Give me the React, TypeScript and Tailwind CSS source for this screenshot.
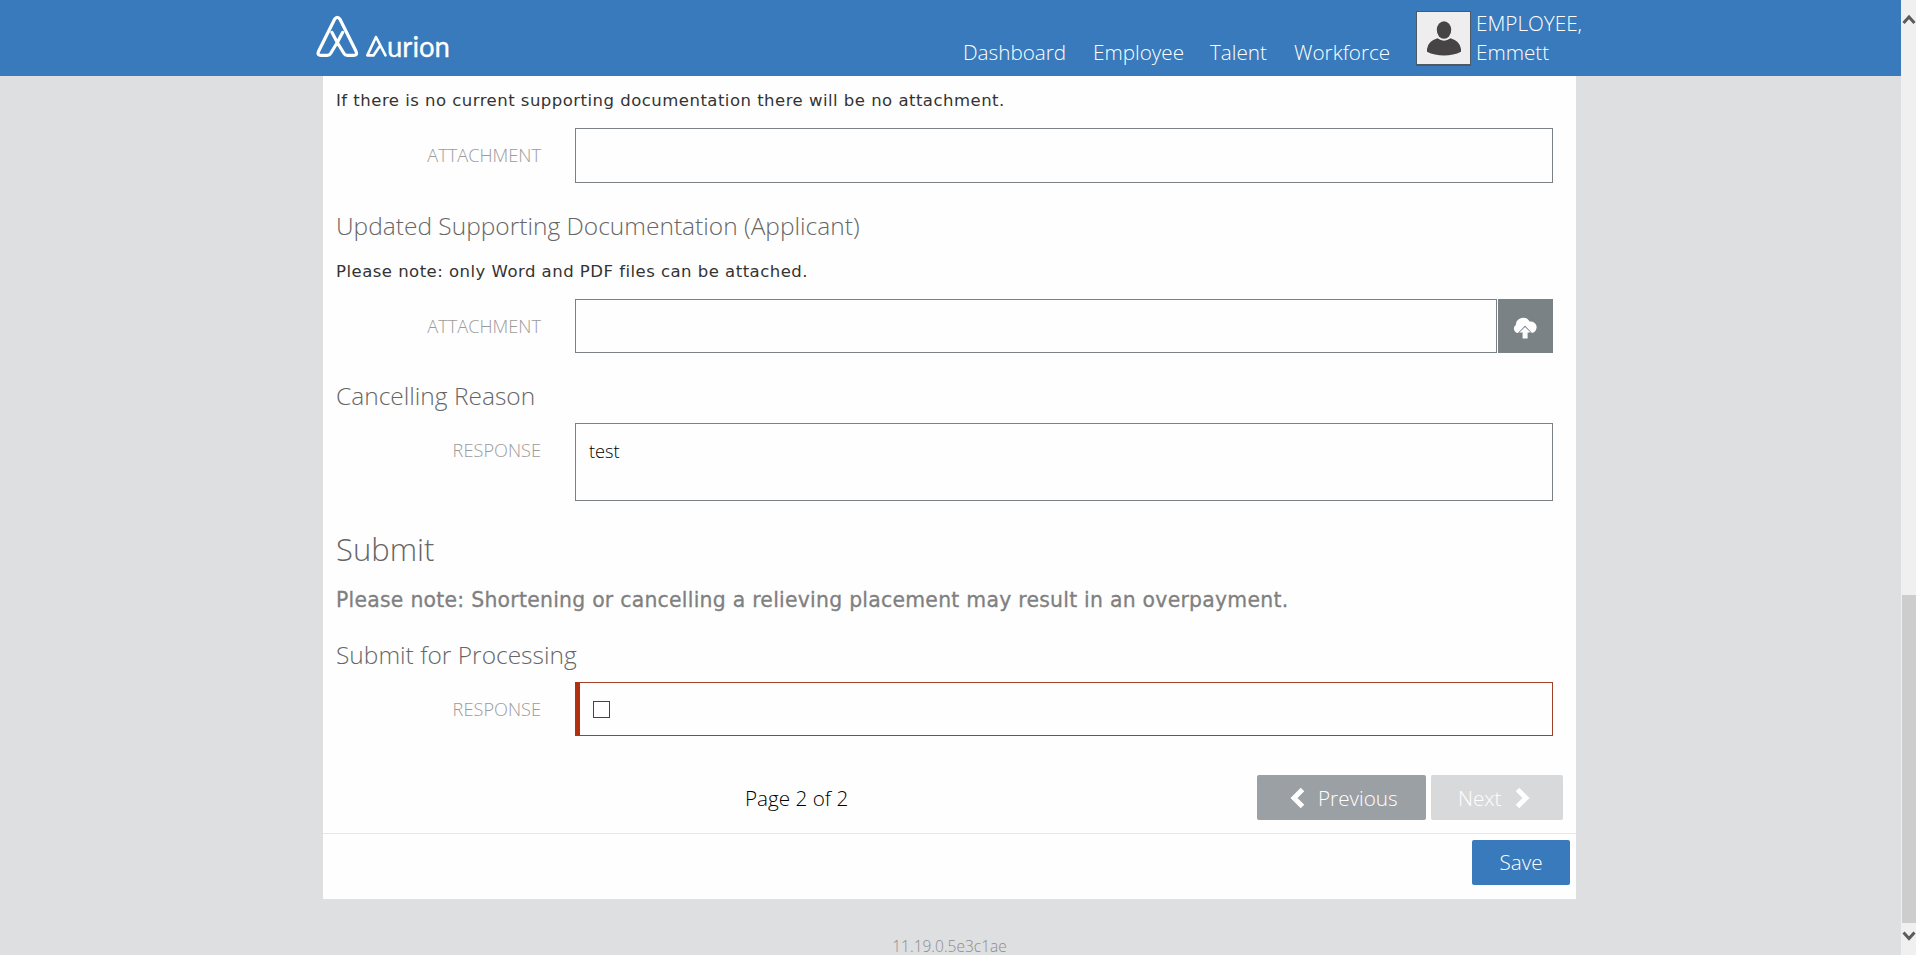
import React from "react";

const sans = "font-['Open_Sans','Liberation_Sans',sans-serif] font-light";
const verdana = "font-['DejaVu_Sans',Verdana,sans-serif]";

function Logo() {
  return (
    <svg className="mt-[14px] block h-[48px] w-[140px]" viewBox="0 0 140 48" fill="none" stroke="#fff" strokeLinecap="round" strokeLinejoin="round">
      <g strokeWidth="3.2">
        <path d="M16 18.5 L21.3 28.5 L28 39.5 Q29 41.3 31.5 41.3 H37.5 Q41.8 41.3 40 37.3 L24 5.2 Q21.3 1.4 18.6 5.2 L2.6 37.3 Q0.8 41.3 5.1 41.3 H11.1 Q13.6 41.3 14.6 39.5 L21.3 28.5 L26.6 18.5" />
      </g>
      <path strokeWidth="2.6" d="M69.5 41.4 L60 23 L51.3 41.4 H57.5 L63.5 32.5" />
      <text x="71" y="42.5" fill="#fff" stroke="#fff" strokeWidth="0.3" fontSize="29.5" textLength="63" lengthAdjust="spacingAndGlyphs" className="font-['Lato',sans-serif]">urion</text>
    </svg>
  );
}

function Avatar() {
  return (
    <div className="mt-[11px] h-[55px] w-[55px] border border-b-2 border-[#4d5a66] bg-[#efeeef]">
      <svg viewBox="0 0 53 52" className="block h-full w-full" fill="#464445">
        <ellipse cx="27" cy="18" rx="7.2" ry="8.8" />
        <path d="M20.5 26.3 Q27 31 33.5 26.3 Q43 29 44 37 L44 39.8 Q36.5 43.6 27 43.6 Q17.5 43.6 10 39.8 L10 37 Q11 29 20.5 26.3Z" />
      </svg>
    </div>
  );
}

function Header() {
  return (
    <header className="flex h-[76px] shrink-0 bg-[#387abb] pl-[316px] text-white">
      <Logo />
      <nav className={`${sans} ml-[507px] flex h-[76px] w-[453px] items-start whitespace-nowrap pt-[38px] text-[20.7px] leading-[29px]`}>
        <a className="w-[130px]">Dashboard</a>
        <a className="w-[117px]">Employee</a>
        <a className="w-[84px]">Talent</a>
        <a>Workforce</a>
      </nav>
      <Avatar />
      <div className={`${sans} ml-[5px] pt-[9px] text-[20.7px] leading-[29px]`}>
        <div>EMPLOYEE,</div>
        <div>Emmett</div>
      </div>
    </header>
  );
}

function Row({ label, children }: { label: string; children: React.ReactNode }) {
  return (
    <div className="flex">
      <div className={`${sans} w-[205px] pt-[14px] text-right text-[18.2px] leading-[26px] text-[#9b9b9b]`}>{label}</div>
      <div className="ml-[34px] flex w-[978px]">{children}</div>
    </div>
  );
}

function Chevron({ left }: { left?: boolean }) {
  return (
    <svg width="15" height="22" viewBox="0 0 15 22" fill="none" stroke="#fff" strokeWidth="5">
      <path d={left ? "M12.5 2.5 L4 11 L12.5 19.5" : "M2.5 2.5 L11 11 L2.5 19.5"} />
    </svg>
  );
}

function Scrollbar() {
  return (
    <div className="flex w-[15px] shrink-0 flex-col items-end bg-[#f0f0f0]">
      <svg className="h-[595px] w-[14px]" viewBox="0 0 14 595" fill="none" stroke="#5b5b5b" strokeWidth="3">
        <path d="M1.5 23 L7 17 L12.5 23" />
      </svg>
      <div className="h-[328px] w-[14px] bg-[#cdcdcd]" />
      <svg className="h-[32px] w-[14px]" viewBox="0 0 14 32" fill="none" stroke="#5b5b5b" strokeWidth="3">
        <path d="M1.5 9.5 L7 15.5 L12.5 9.5" />
      </svg>
    </div>
  );
}

export default function App() {
  return (
    <div className="flex h-[955px] w-[1916px] overflow-hidden bg-[#dedfe1]">
      <div className="flex h-full w-[1901px] flex-col">
        <Header />
        <main className="ml-[323px] flex h-[823px] w-[1253px] shrink-0 flex-col whitespace-nowrap bg-[#fefefe]">
          <div className="h-[757px] pl-[13px]">
            <p className={`${verdana} h-[52px] pt-[13px] text-[16.5px] leading-[24px] tracking-[0.48px] text-[#333]`}>
              If there is no current supporting documentation there will be no attachment.
            </p>
            <Row label="ATTACHMENT">
              <div className="h-[55px] w-full border border-[#7b8085]" />
            </Row>
            <h3 className={`${sans} h-[72px] pt-[25px] text-[24.5px] leading-[36px] text-[#666]`}>Updated Supporting Documentation (Applicant)</h3>
            <p className={`${verdana} h-[44px] pt-[5px] text-[16.5px] leading-[24px] tracking-[0.48px] text-[#333]`}>
              Please note: only Word and PDF files can be attached.
            </p>
            <Row label="ATTACHMENT">
              <div className="h-[54px] w-[922px] border border-[#7b8085]" />
              <button className="ml-px flex h-[54px] w-[55px] items-center justify-center bg-[#7b8286]">
                <svg className="mt-[3px]" width="25" height="22" viewBox="0 0 25 22" fill="#fff">
                  <path d="M5 16 A4.4 4.4 0 0 1 2.8 8 A7.4 7.4 0 0 1 16.6 4.6 A5.8 5.8 0 1 1 19 16 L12 8.6 Z" />
                  <path d="M12 10 L17.6 15.6 H14.6 V21.5 H9.6 V15.6 H6.4 Z" />
                </svg>
              </button>
            </Row>
            <h3 className={`${sans} h-[70px] pt-[25px] text-[24.5px] leading-[36px] text-[#666]`}>Cancelling Reason</h3>
            <Row label="RESPONSE">
              <div className={`${sans} h-[78px] w-full border border-[#7b8085] pl-[13px] pt-[14px] text-[18.2px] leading-[26px] text-black`}>test</div>
            </Row>
            <h2 className={`${sans} h-[80px] pt-[25px] text-[31px] leading-[46px] text-[#666]`}>Submit</h2>
            <p className={`${verdana} h-[50px] pt-[4px] text-[20.4px] leading-[30px] tracking-[0.25px] text-[#808080] [-webkit-text-stroke:0.3px_#808080]`}>
              Please note: Shortening or cancelling a relieving placement may result in an overpayment.
            </p>
            <h3 className={`${sans} h-[51px] pt-[6px] text-[24.5px] leading-[36px] text-[#666]`}>Submit for Processing</h3>
            <Row label="RESPONSE">
              <div className="flex h-[54px] w-full items-center border border-l-[5px] border-[#a04028] border-l-[#b03010] pl-[13px]">
                <div className="h-[17px] w-[17px] border border-[#444] bg-white" />
              </div>
            </Row>
            <div className="flex h-[97px] pt-[39px]">
              <div className={`${sans} w-[921px] pl-[409px] pt-[8px] text-[20.7px] leading-[30px] text-black`}>Page 2 of 2</div>
              <button className={`${sans} flex h-[45px] w-[169px] items-center rounded-[2px] bg-[#9ba0a4] pl-[33px] text-[20.7px] text-white`}>
                <Chevron left />
                <span className="ml-[13px] pt-[2px]">Previous</span>
              </button>
              <button className={`${sans} ml-[5px] flex h-[45px] w-[132px] items-center rounded-[2px] bg-[#d7d9db] pl-[27px] text-[20.7px] text-white`}>
                <span className="w-[57px] pt-[2px] text-left">Next</span>
                <Chevron />
              </button>
            </div>
          </div>
          <div className="flex h-[66px] justify-end border-t border-[#e3e7ea] pr-[6px] pt-[6px]">
            <button className={`${sans} h-[45px] w-[98px] rounded-[2px] bg-[#387abb] text-[20.7px] text-white`}>Save</button>
          </div>
        </main>
        <footer className={`${sans} w-full pr-[2px] pt-[39px] text-center text-[15.5px] leading-[16px] text-[#8c8c8c]`}>11.19.0.5e3c1ae</footer>
      </div>
      <Scrollbar />
    </div>
  );
}
